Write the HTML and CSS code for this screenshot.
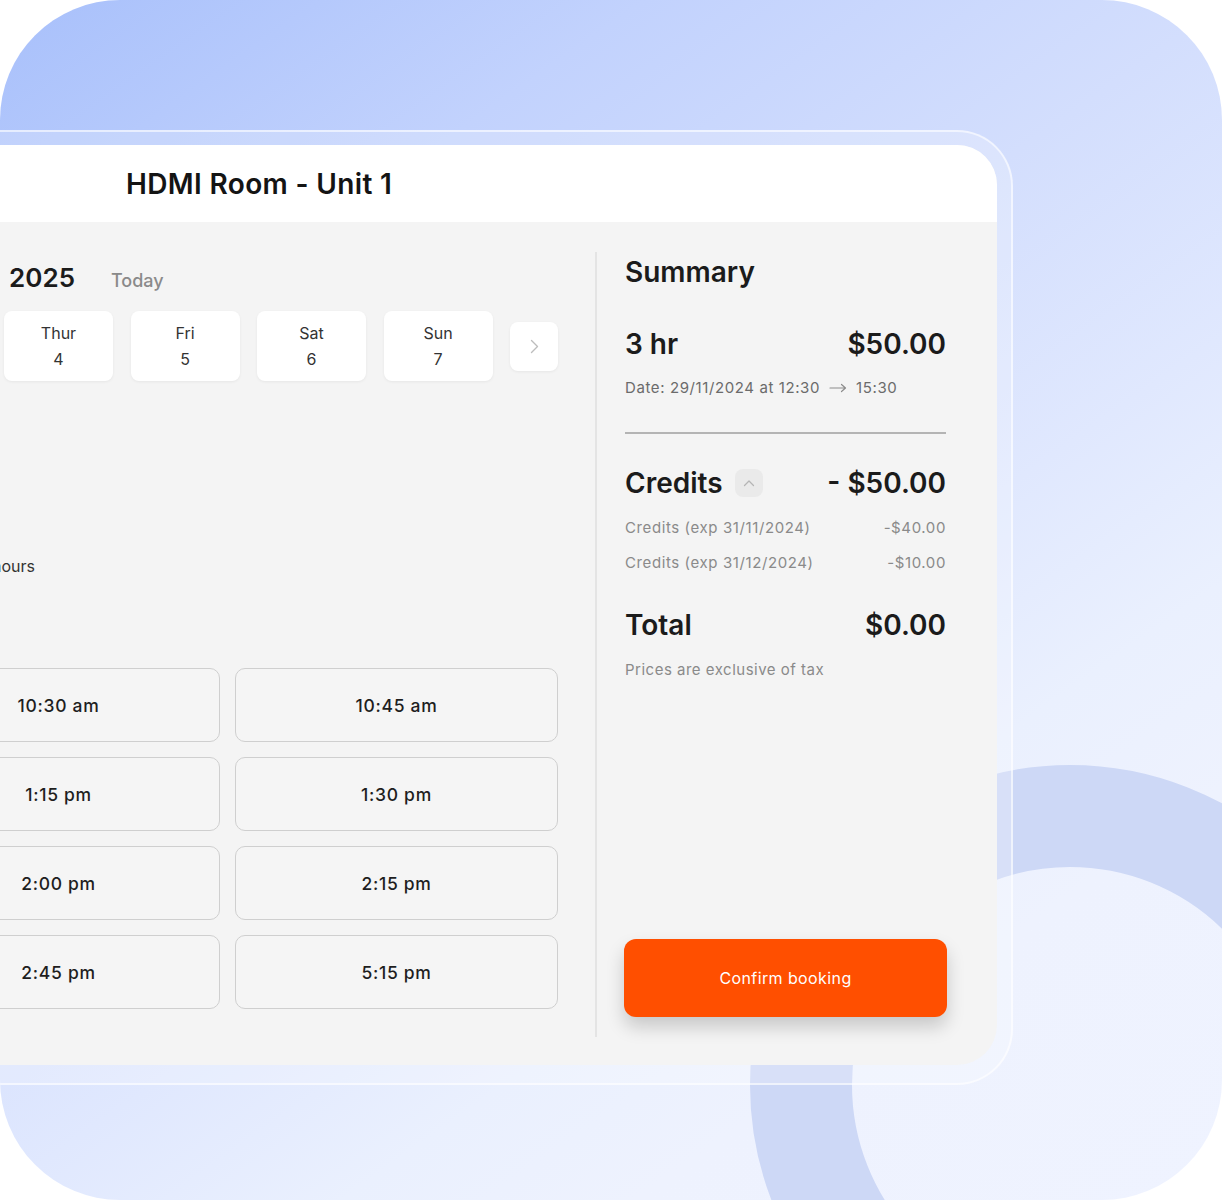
FILE: index.html
```html
<!DOCTYPE html>
<html lang="en">
<head>
<meta charset="utf-8">
<title>HDMI Room - Unit 1</title>
<link rel="stylesheet" href="styles.css">
</head>
<body>
<div class="hero">
  <div class="ring"></div>
  <div class="frame">
    <div class="card">
      <header class="card-head">
        <h1 class="room-title">HDMI Room - Unit 1</h1>
      </header>
      <div class="card-body">
        <section class="booking">
          <div class="month-row">
            <h2 class="month">2025</h2>
            <span class="today">Today</span>
          </div>
          <div class="days">
            <div class="day"><span>Thur</span><span>4</span></div>
            <div class="day"><span>Fri</span><span>5</span></div>
            <div class="day"><span>Sat</span><span>6</span></div>
            <div class="day"><span>Sun</span><span>7</span></div>
            <button class="next" type="button" aria-label="Next days">
              <svg width="9" height="15" viewBox="0 0 9 15"><path d="M1.5 1.5 L7.5 7.5 L1.5 13.5" fill="none" stroke="#bdbdbd" stroke-width="1.4" stroke-linecap="round" stroke-linejoin="round"/></svg>
            </button>
          </div>
          <p class="duration">Duration: 3 hours</p>
          <div class="slots">
            <button class="slot" type="button">10:30 am</button>
            <button class="slot" type="button">10:45 am</button>
            <button class="slot" type="button">1:15 pm</button>
            <button class="slot" type="button">1:30 pm</button>
            <button class="slot" type="button">2:00 pm</button>
            <button class="slot" type="button">2:15 pm</button>
            <button class="slot" type="button">2:45 pm</button>
            <button class="slot" type="button">5:15 pm</button>
          </div>
        </section>
        <aside class="summary">
          <h2 class="sum-title">Summary</h2>
          <div class="big-row row-first"><span>3 hr</span><span>$50.00</span></div>
          <div class="date">
            <span>Date: 29/11/2024 at 12:30</span>
            <svg width="18" height="10" viewBox="0 0 18 10"><path d="M1 5 H16.5 M12.5 1.5 L16.5 5 L12.5 8.5" fill="none" stroke="#8c8c8c" stroke-width="1.2" stroke-linecap="round" stroke-linejoin="round"/></svg>
            <span>15:30</span>
          </div>
          <div class="rule"></div>
          <div class="big-row row-credits">
            <span>Credits</span>
            <span class="chev"><svg width="12" height="8" viewBox="0 0 12 8"><path d="M1.5 6.5 L6 2 L10.5 6.5" fill="none" stroke="#b5b5b5" stroke-width="1.3" stroke-linecap="round" stroke-linejoin="round"/></svg></span>
            <span class="push">- $50.00</span>
          </div>
          <div class="sub sub-first"><span>Credits (exp 31/11/2024)</span><span>-$40.00</span></div>
          <div class="sub sub-second"><span>Credits (exp 31/12/2024)</span><span>-$10.00</span></div>
          <div class="big-row row-total"><span>Total</span><span>$0.00</span></div>
          <p class="note">Prices are exclusive of tax</p>
          <button class="confirm" type="button">Confirm booking</button>
        </aside>
      </div>
    </div>
  </div>
</div>
</body>
</html>
```

FILE: styles.css
```css
html, body {
  margin: 0;
  padding: 0;
  background: #ffffff;
  overflow: hidden;
}

body {
  font-family: "Inter", "Liberation Sans", sans-serif;
  color: #1b1b1b;
  width: 1224px;
  height: 1200px;
}

.hero {
  position: relative;
  width: 1222px;
  height: 1200px;
  box-sizing: border-box;
  padding-top: 130px;
  border-radius: 120px;
  overflow: hidden;
  background: linear-gradient(145deg, #a8c0fb 0%, #c2d2fd 22%, #d3defd 42%, #e0e8fe 58%, #eaf0fe 70%, #eef2fe 80%, #eff3ff 100%);
}

.ring {
  position: absolute;
  left: 750px;
  top: 765px;
  width: 640px;
  height: 640px;
  box-sizing: border-box;
  border-radius: 50%;
  border: 102px solid #cdd8f6;
}

.frame {
  position: relative;
  z-index: 1;
  margin-left: -171px;
  width: 1184px;
  box-sizing: border-box;
  border: 2px solid rgba(255, 255, 255, 0.6);
  border-radius: 56px;
  padding: 13px 14px 18px;
  background: rgba(255, 255, 255, 0.22);
}

.card {
  height: 920px;
  border-radius: 40px;
  overflow: hidden;
  display: flex;
  flex-direction: column;
  background: #f4f4f4;
}

.card-head {
  height: 77px;
  flex-shrink: 0;
  background: #ffffff;
  display: flex;
  align-items: center;
  padding-left: 281px;
}

.room-title {
  margin: 0;
  font-weight: 600;
  font-size: 28px;
  line-height: 34px;
  color: #141414;
  letter-spacing: 0.35px;
}

.card-body {
  flex: 1;
  display: flex;
  padding: 30px 51px 28px 52px;
}

/* left column */
.booking {
  width: 661px;
  flex-shrink: 0;
}

.month-row {
  display: flex;
  align-items: baseline;
  margin-top: 10px;
  height: 32px;
}

.month {
  width: 178px;
  display: flex;
  justify-content: flex-end;
  white-space: nowrap;
  margin: 0;
  font-weight: 600;
  font-size: 26px;
  line-height: 32px;
  color: #1b1b1b;
}

.today {
  margin-left: 36px;
  font-weight: 500;
  font-size: 18px;
  color: #8a8a8a;
}

.days {
  display: flex;
  justify-content: flex-end;
  align-items: center;
  gap: 17.5px;
  margin-top: 13px;
  padding: 4px 0;
}

.day {
  flex: 0 0 109px;
  height: 70px;
  box-sizing: border-box;
  background: #ffffff;
  border-radius: 8px;
  display: flex;
  flex-direction: column;
  align-items: center;
  justify-content: center;
  gap: 6px;
  font-size: 16px;
  line-height: 20px;
  color: #333333;
  box-shadow: 0 1px 3px rgba(0, 0, 0, 0.06);
}

.next {
  flex: 0 0 48px;
  height: 49px;
  border: 0;
  padding: 0;
  background: #ffffff;
  border-radius: 8px;
  display: flex;
  align-items: center;
  justify-content: center;
  box-shadow: 0 1px 3px rgba(0, 0, 0, 0.06);
}

.duration {
  width: 138px;
  display: flex;
  justify-content: flex-end;
  white-space: nowrap;
  margin: 170px 0 0;
  font-size: 16px;
  line-height: 22px;
  color: #333333;
}

.slots {
  display: grid;
  grid-template-columns: 323px 323px;
  gap: 15px;
  margin-top: 91px;
}

.slot {
  height: 74px;
  box-sizing: border-box;
  border: 1.5px solid #cfcfcf;
  border-radius: 10px;
  background: #f5f5f5;
  font-family: "Inter", "Liberation Sans", sans-serif;
  font-weight: 500;
  font-size: 17.5px;
  letter-spacing: 0.7px;
  color: #1e1e1e;
  padding: 0;
}

/* summary column */
.summary {
  width: 321px;
  flex-shrink: 0;
  margin-left: 37px;
  border-left: 2px solid #e4e4e4;
  padding-left: 28px;
  padding-bottom: 20px;
  display: flex;
  flex-direction: column;
}

.sum-title {
  margin: 3px 0 0;
  font-weight: 600;
  font-size: 28px;
  line-height: 34px;
  color: #1b1b1b;
}

.big-row {
  display: flex;
  justify-content: space-between;
  align-items: center;
  font-weight: 600;
  font-size: 28px;
  line-height: 34px;
  color: #1b1b1b;
}

.row-first { margin-top: 38px; }
.row-credits { margin-top: 32px; justify-content: flex-start; }
.row-total { margin-top: 35px; }

.push { margin-left: auto; }

.chev {
  width: 28px;
  height: 28px;
  margin-left: 12px;
  border-radius: 8px;
  background: #eaeaea;
  display: flex;
  align-items: center;
  justify-content: center;
}

.date {
  margin-top: 17px;
  display: flex;
  align-items: center;
  gap: 9px;
  font-size: 15px;
  line-height: 20px;
  letter-spacing: 0.6px;
  color: #6b6b6b;
}

.rule {
  margin-top: 34px;
  height: 2px;
  background: #b4b4b4;
}

.sub {
  display: flex;
  justify-content: space-between;
  font-size: 15px;
  line-height: 20px;
  letter-spacing: 0.6px;
  color: #8a8a8a;
}

.sub-first { margin-top: 18px; }
.sub-second { margin-top: 15px; }

.note {
  margin: 18px 0 0;
  font-size: 15px;
  line-height: 20px;
  letter-spacing: 0.5px;
  color: #8a8a8a;
}

.confirm {
  margin-top: auto;
  height: 78px;
  width: 323px;
  margin-left: -1px;
  border: 0;
  border-radius: 12px;
  background: #ff4f00;
  color: #ffffff;
  font-family: "Inter", "Liberation Sans", sans-serif;
  font-weight: 400;
  font-size: 16px;
  letter-spacing: 0.4px;
  box-shadow: 0 10px 18px rgba(0, 0, 0, 0.18);
}
```
